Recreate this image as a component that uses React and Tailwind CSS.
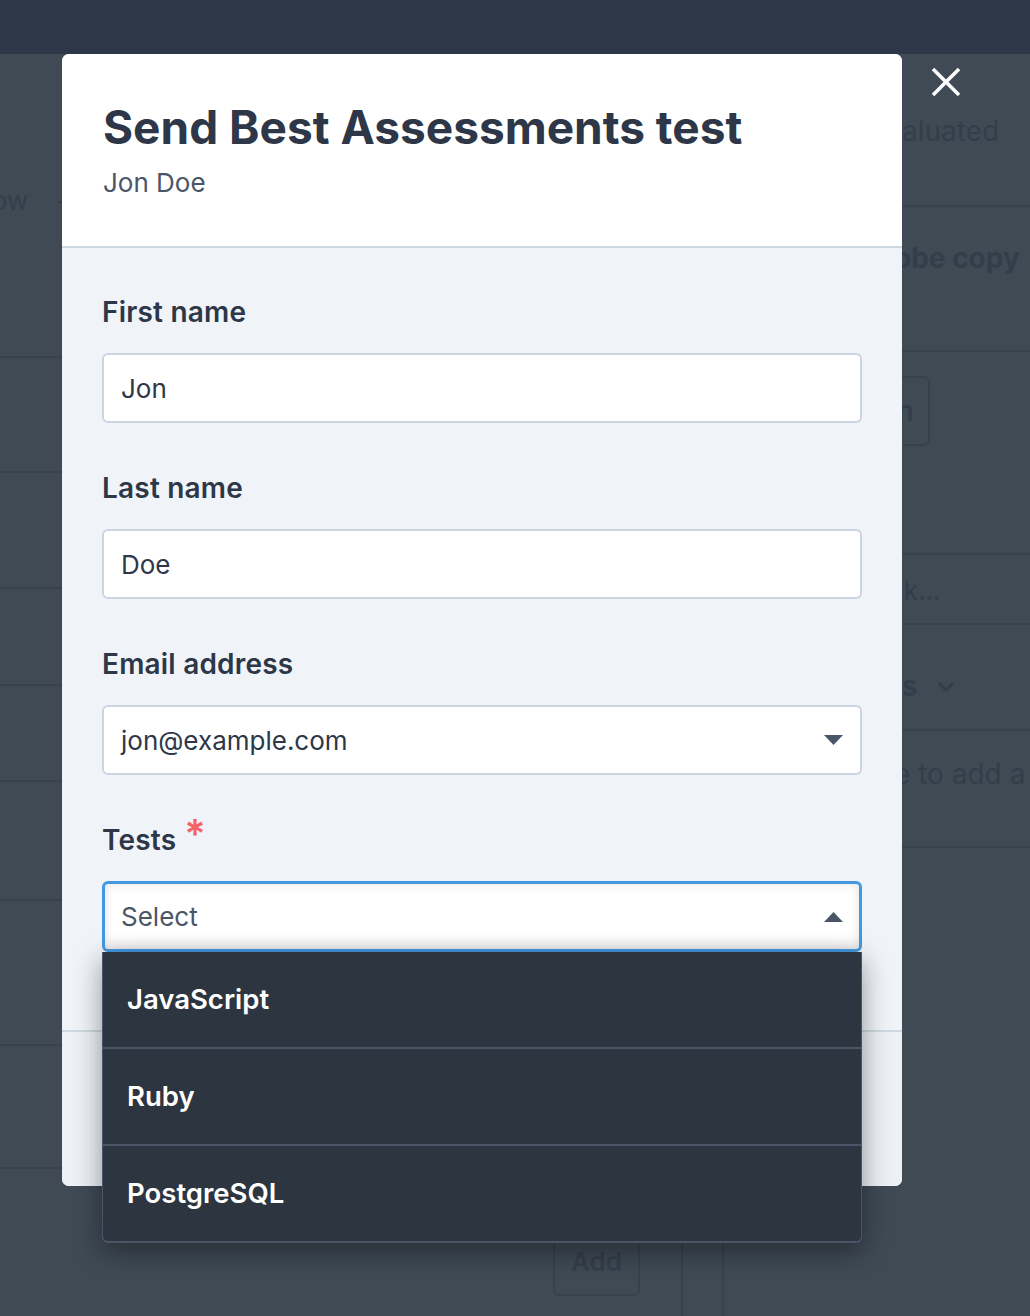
import React from "react";

function Caret({ up }) {
  return (
    <svg width="19" height="10" viewBox="0 0 19 10" className="shrink-0">
      {up ? (
        <polygon points="0,10 19,10 9.5,0" fill="#4a5568" />
      ) : (
        <polygon points="0,0 19,0 9.5,10" fill="#4a5568" />
      )}
    </svg>
  );
}

function Field({ label, children, required }) {
  return (
    <div className="flex flex-col">
      <div className="flex items-start h-[32px] mb-[25px]">
        <span className="text-[28px] leading-[32px] font-semibold text-[#2d3748] tracking-[0.2px]">{label}</span>
        {required && (
          <span className="ml-[8px] -mt-[10px] text-[40px] leading-[40px] font-semibold text-[#f56565]">*</span>
        )}
      </div>
      {children}
    </div>
  );
}

export default function App() {
  const bgText = "text-[#343e4a]";
  const bgLine = "border-[#38424d]";
  return (
    <div
      className="relative w-[1030px] h-[1316px] overflow-hidden bg-[#3f4a55]"
      style={{ fontFamily: "Inter, 'Noto Sans', sans-serif" }}
    >
      {/* top bar */}
      <div className="h-[54px] bg-[#2d3748]" />

      {/* background page (dimmed) */}
      <div className="flex h-[1262px]">
        <div className="w-[120px] flex flex-col">
          <div className={`h-[304px] border-b-2 ${bgLine} pt-[127px] flex gap-[28px] text-[26px] ${bgText}`}>
            <span className="-ml-[8px]">ow</span>
            <span>-</span>
          </div>
          <div className={`h-[115px] border-b-2 ${bgLine}`} />
          <div className={`h-[116px] border-b-2 ${bgLine}`} />
          <div className={`h-[97px] border-b-2 ${bgLine}`} />
          <div className={`h-[96px] border-b-2 ${bgLine}`} />
          <div className={`h-[119px] border-b-2 ${bgLine}`} />
          <div className={`h-[145px] border-b-2 ${bgLine}`} />
          <div className={`h-[123px] border-b-2 ${bgLine}`} />
        </div>
        <div className="flex-1 flex flex-col justify-end">
          <div className="flex items-start h-[78px]">
            <div className="ml-[433px] w-[87px] h-[58px] rounded-[6px] border-2 border-[#38424d] flex items-start justify-center pt-[6px]">
              <span className={`text-[26px] leading-[32px] font-semibold ${bgText}`}>Add</span>
            </div>
            <div className="ml-[41px] w-[2px] h-full bg-[#38424d]" />
            <div className="ml-[39px] w-[2px] h-full bg-[#38424d]" />
          </div>
        </div>
        <div className="w-[150px] flex flex-col">
          <div className={`h-[153px] border-b-2 ${bgLine} pt-[56px] pl-[22px] text-[28px] ${bgText}`}>aluated</div>
          <div className={`h-[145px] border-b-2 ${bgLine} pt-[30px] pl-[14px] text-[28px] font-bold ${bgText}`}>obe copy</div>
          <div className={`h-[203px] border-b-2 ${bgLine} pt-[24px]`}>
            <div className="-ml-[20px] w-[70px] h-[70px] rounded-[6px] border-2 border-[#38424d] flex items-center justify-end pr-[14px]">
              <span className={`text-[28px] font-semibold ${bgText}`}>n</span>
            </div>
          </div>
          <div className={`h-[70px] border-b-2 ${bgLine} pt-[16px] pl-[24px] text-[26px] ${bgText}`}>k...</div>
          <div className={`h-[106px] border-b-2 ${bgLine} pt-[44px] pl-[22px] flex items-start gap-[20px] text-[28px] font-semibold ${bgText}`}>
            <span className="leading-[34px]">s</span>
            <svg width="18" height="12" viewBox="0 0 18 12" className="mt-[12px]">
              <polyline points="2,2 9,9 16,2" fill="none" stroke="#343e4a" strokeWidth="3" />
            </svg>
          </div>
          <div className={`h-[117px] border-b-2 ${bgLine} pt-[22px] pl-[14px] whitespace-nowrap text-[28px] ${bgText}`}>e to add a</div>
        </div>
      </div>

      {/* close */}
      <svg className="absolute left-[930px] top-[66px]" width="32" height="32" viewBox="0 0 32 32">
        <line x1="3" y1="3" x2="29" y2="29" stroke="white" strokeWidth="3.5" />
        <line x1="29" y1="3" x2="3" y2="29" stroke="white" strokeWidth="3.5" />
      </svg>

      {/* modal */}
      <div className="absolute left-[62px] top-[54px] w-[840px] h-[1132px] rounded-[7px] flex flex-col bg-[#f0f4f8]">
        <div className="h-[194px] bg-white rounded-t-[7px] border-b-2 border-[#cfd8e0] px-[41px] pt-[45px] flex flex-col">
          <h1 className="text-[46px] leading-[56px] font-bold text-[#2d3748]">Send Best Assessments test</h1>
          <div className="mt-[12px] text-[26px] leading-[32px] text-[#4a5568]">Jon Doe</div>
        </div>
        <div className="flex-1 px-[40px] pt-[48px] flex flex-col gap-[49px] border-b-2 border-[#cfd8e0]">
          <Field label="First name">
            <div className="h-[70px] rounded-[6px] border-2 border-[#cbd5e0] bg-white flex items-center px-[17px] text-[26px] text-[#2d3748]">
              Jon
            </div>
          </Field>
          <Field label="Last name">
            <div className="h-[70px] rounded-[6px] border-2 border-[#cbd5e0] bg-white flex items-center px-[17px] text-[26px] text-[#2d3748]">
              Doe
            </div>
          </Field>
          <Field label="Email address">
            <div className="h-[70px] rounded-[6px] border-2 border-[#cbd5e0] bg-white flex items-center justify-between pl-[17px] pr-[17px] text-[26px] text-[#2d3748]">
              <span>jon@example.com</span>
              <Caret />
            </div>
          </Field>
          <Field label="Tests" required>
            <div className="relative">
              <div className="h-[71px] rounded-[6px] border-[3px] border-[#4299e1] bg-white shadow-[inset_0_3px_8px_rgba(0,0,0,0.06),inset_0_-6px_10px_rgba(0,0,0,0.08)] flex items-center justify-between pl-[16px] pr-[16px] text-[26px] text-[#4a5568]">
                <span>Select</span>
                <Caret up />
              </div>
              <div className="absolute left-0 right-0 top-full z-10 bg-[#2d3540] rounded-b-[6px] border-b-2 border-x border-[#4a5568] shadow-[0_8px_28px_rgba(0,0,0,0.4)] flex flex-col">
                <div className="h-[95px] flex items-center px-[24px] text-[27.5px] font-semibold text-white">JavaScript</div>
                <div className="h-[97px] border-t-2 border-[#4a5568] flex items-center px-[24px] text-[27.5px] font-semibold text-white">Ruby</div>
                <div className="h-[97px] border-t-2 border-[#4a5568] flex items-center px-[24px] text-[27.5px] font-semibold text-white">PostgreSQL</div>
              </div>
            </div>
          </Field>
        </div>
        <div className="h-[154px] rounded-b-[7px] bg-[#edf1f5]" />
      </div>
    </div>
  );
}
